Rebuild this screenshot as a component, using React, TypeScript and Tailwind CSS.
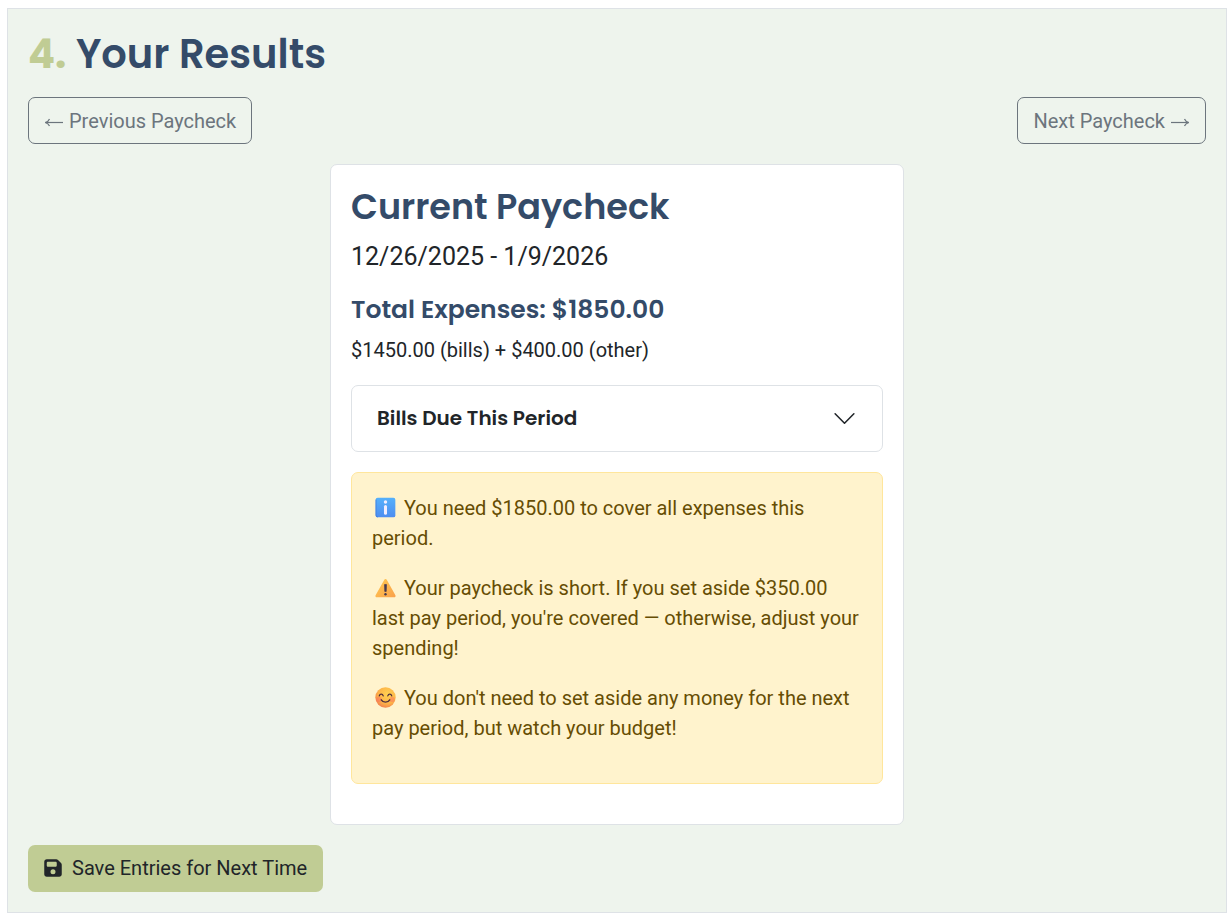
import { useState } from "react";
import { FaFloppyDisk } from "react-icons/fa6";

const headingFont = "font-[Poppins,Inter,sans-serif]";
const outlineButton =
  "flex h-[47px] items-center gap-[5px] rounded-[7px] border border-[#6c757d] px-[15px] text-[#6c757d] hover:bg-[#6c757d] hover:text-white";
const emoji = "mx-[3px] inline-block h-[21px] w-[21px] align-[-3px]";

function Arrow({ className = "" }: { className?: string }) {
  return (
    <svg
      viewBox="0 0 20 20"
      className={`h-5 w-5 ${className}`}
      fill="none"
      stroke="currentColor"
      strokeWidth="1.2"
      aria-hidden="true"
    >
      <path d="M1 11.500h17.500" />
      <path d="M14.500 8c.7 1.800 2.200 3 4.300 3.500-2.100.5-3.600 1.700-4.300 3.500" />
    </svg>
  );
}

function InfoIcon() {
  return (
    <svg viewBox="0 0 32 32" className={emoji} aria-hidden="true">
      <defs>
        <linearGradient id="info-bg" x1="0" y1="0" x2="0" y2="1">
          <stop offset="0" stopColor="#55b1fb" />
          <stop offset="1" stopColor="#4e8df0" />
        </linearGradient>
      </defs>
      <rect x="1" y="1" width="30" height="30" rx="3" fill="url(#info-bg)" />
      <path d="M1.500 4v23.500a3 3 0 0 0 3 3" fill="none" stroke="#3c7bdc" strokeWidth="1.2" />
      <circle cx="16" cy="7.500" r="2.600" fill="#f3eeff" />
      <rect x="13.700" y="12" width="4.600" height="15" rx="2.300" fill="#f3eeff" />
    </svg>
  );
}

function WarningIcon() {
  return (
    <svg viewBox="0 0 32 32" className={emoji} aria-hidden="true">
      <defs>
        <linearGradient id="warn-bg" x1="0" y1="0" x2="1" y2="1">
          <stop offset="0.2" stopColor="#ffc24f" />
          <stop offset="1" stopColor="#f9a04b" />
        </linearGradient>
      </defs>
      <path
        d="M14.200 4.200c.8-1.500 2.900-1.500 3.700 0l13.200 23.500c.8 1.500-.2 3.300-1.900 3.300H2.800C1.100 31 .1 29.200.9 27.700z"
        fill="url(#warn-bg)"
      />
      <path d="M14.500 11.500h3l-.4 10.500h-2.200z" fill="#45394f" stroke="#45394f" strokeLinejoin="round" />
      <circle cx="16" cy="26.200" r="1.800" fill="#45394f" />
    </svg>
  );
}

function SmileIcon() {
  return (
    <svg viewBox="0 0 32 32" className={emoji} aria-hidden="true">
      <defs>
        <radialGradient id="smile-bg" cx="0.6" cy="0.35" r="0.75">
          <stop offset="0" stopColor="#ffd352" />
          <stop offset="0.6" stopColor="#fdb348" />
          <stop offset="1" stopColor="#ef7350" />
        </radialGradient>
      </defs>
      <circle cx="16" cy="16" r="15.500" fill="url(#smile-bg)" />
      <circle cx="6" cy="19" r="4" fill="#f9646c" opacity="0.4" />
      <circle cx="26" cy="19" r="4" fill="#f9646c" opacity="0.4" />
      <g fill="none" stroke="#4f2e3f" strokeWidth="2" strokeLinecap="round">
        <path d="M6.500 13.500c1-3.500 5-3.500 6 0" />
        <path d="M19.500 13.500c1-3.500 5-3.500 6 0" />
        <path d="M9.500 19.500c3 4.800 10 4.800 13 0" />
      </g>
    </svg>
  );
}

export default function App() {
  const [open, setOpen] = useState(false);

  return (
    <section className="mt-2 mr-[5px] mb-[7px] ml-[7px] border border-[#dee2e6] bg-[#eef4ed] p-5 font-[Roboto,sans-serif] text-[20px] leading-[30px] text-[#212529]">
      <h2 className={`${headingFont} mb-[18px] text-[40px] leading-[50px] font-semibold text-[#344b69]`}>
        <span className="font-bold text-[#c0cc94]">4.</span> Your Results
      </h2>

      {/* Pay period navigation */}
      <div className="mb-5 flex flex-wrap justify-between gap-4">
        <button type="button" className={outlineButton}>
          <Arrow className="-scale-x-100" />
          Previous Paycheck
        </button>
        <button type="button" className={outlineButton}>
          Next Paycheck
          <Arrow />
        </button>
      </div>

      {/* Paycheck card */}
      <article className="mx-auto mb-5 w-[574px] max-w-full rounded-[7px] border border-[#dee2e6] bg-white px-5 pt-5 pb-10">
        <h3 className={`${headingFont} mb-[9px] text-[35px] leading-[44px] font-semibold text-[#344b69]`}>
          Current Paycheck
        </h3>
        <p className="mb-5 text-[25px] leading-[37px]">12/26/2025 - 1/9/2026</p>
        <h4 className={`${headingFont} mb-[10px] text-[25px] leading-[30px] font-semibold text-[#344b69]`}>
          Total Expenses: $1850.00
        </h4>
        <p className="mb-5">$1450.00 (bills) + $400.00 (other)</p>

        <div className="mb-5 rounded-[7px] border border-[#dee2e6]">
          <button
            type="button"
            aria-expanded={open}
            onClick={() => setOpen(!open)}
            className={`${headingFont} flex h-[65px] w-full items-center justify-between px-[25px] text-left font-semibold`}
          >
            <span className="pb-px">Bills Due This Period</span>
            <svg
              viewBox="0 0 16 16"
              className={open ? "h-[25px] w-[25px] rotate-180" : "h-[25px] w-[25px]"}
              fill="none"
              stroke="#212529"
              strokeLinecap="round"
              strokeLinejoin="round"
              aria-hidden="true"
            >
              <path d="m2 5 6 6 6-6" />
            </svg>
          </button>
          {open && <p className="px-[25px] pb-5">$1450.00</p>}
        </div>

        <div className="rounded-[7px] border border-[#ffe69c] bg-[#fff3cd] p-5 text-[#664d03]">
          <p className="mb-5">
            <InfoIcon /> You need $1850.00 to cover all expenses this period.
          </p>
          <p className="mb-5">
            <WarningIcon /> Your paycheck is short. If you set aside $350.00 last pay period, you're covered — otherwise,
            adjust your spending!
          </p>
          <p className="mb-5">
            <SmileIcon /> You don't need to set aside any money for the next pay period, but watch your budget!
          </p>
        </div>
      </article>

      <button
        type="button"
        className="flex h-[47px] items-center gap-[10px] rounded-[7px] bg-[#c0cc94] px-4 pb-px hover:bg-[#b2bf83]"
      >
        <FaFloppyDisk className="h-5 w-[18px]" aria-hidden="true" />
        Save Entries for Next Time
      </button>
    </section>
  );
}
